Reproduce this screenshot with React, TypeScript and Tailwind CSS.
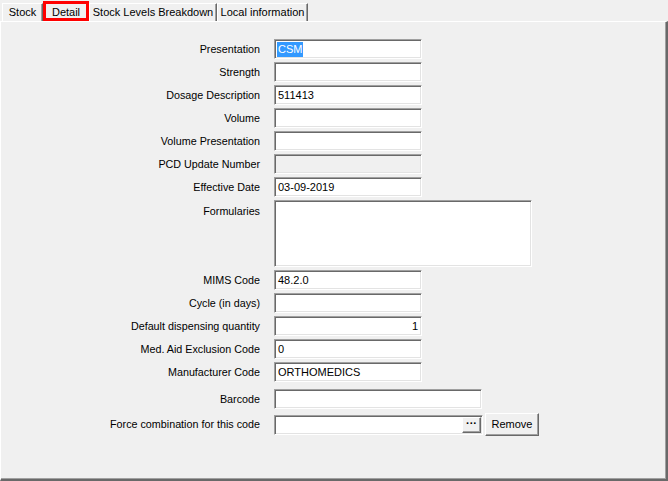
import React from "react";

const font = { fontFamily: '"Liberation Sans", Arial, sans-serif' };

function Field({ value = "", width = 148, height = 20, align = "left", disabled = false, selected = false, className = "" }: { value?: string; width?: number; height?: number; align?: "left" | "right"; disabled?: boolean; selected?: boolean; className?: string }) {
  return (
    <div
      className={`border border-t-[#a0a0a0] border-l-[#a0a0a0] border-r-white border-b-white shadow-[inset_1px_1px_0_#696969,inset_-1px_-1px_0_#e3e3e3] ${disabled ? "bg-[#f0f0f0]" : "bg-white"} flex items-center px-[3px] text-[11px] leading-none text-black ${align === "right" ? "justify-end" : ""} ${className}`}
      style={{ width, height }}
    >
      {selected ? <span className="bg-[#3399ff] text-white px-[1px] py-[2px] -ml-[1px]">{value}</span> : <span className="pt-[1px]">{value}</span>}
    </div>
  );
}

function Row({ label, children, top = false, className = "" }: { label: string; children: React.ReactNode; top?: boolean; className?: string }) {
  return (
    <div className={`flex ${top ? "items-start" : "items-center"} ${className}`}>
      <div className={`w-[259px] text-right text-[10.75px] leading-none text-black mr-[14px] ${top ? "pt-[6px]" : ""}`}>{label}</div>
      {children}
    </div>
  );
}

function Tab({ label, w, selected = false }: { label: string; w: number; selected?: boolean }) {
  if (selected) {
    return (
      <div className="h-[20px] border-[3px] border-[#ff0000] bg-[#f0f0f0] flex items-start justify-center text-[11px] leading-none pt-[3px] -mb-[1px] relative z-10" style={{ width: w }}>
        {label}
      </div>
    );
  }
  return (
    <div className="h-[18px] border-t border-l border-white border-r border-r-[#696969] shadow-[inset_-1px_0_0_#a0a0a0] flex items-center justify-center text-[11px] leading-none pb-[1px]" style={{ width: w }}>
      {label}
    </div>
  );
}

export default function App() {
  return (
    <div className="w-[668px] h-[481px] bg-[#f0f0f0] overflow-hidden flex flex-col" style={font}>
      <div className="h-[21px] flex items-end pl-[2px] shrink-0">
        <Tab label="Stock" w={41} />
        <div className="self-start mt-[1px]">
          <Tab label="Detail" w={46} selected />
        </div>
        <Tab label="Stock Levels Breakdown" w={128} />
        <Tab label="Local information" w={91} />
      </div>
      <div className="flex-1 border-t border-l border-white border-r-2 border-r-[#696969] border-b-2 border-b-[#696969] shadow-[inset_-1px_-1px_0_#a0a0a0] flex flex-col pt-[17px] gap-[3px]">
        <Row label="Presentation"><Field value="CSM" selected /></Row>
        <Row label="Strength"><Field /></Row>
        <Row label="Dosage Description"><Field value="511413" /></Row>
        <Row label="Volume"><Field /></Row>
        <Row label="Volume Presentation"><Field /></Row>
        <Row label="PCD Update Number"><Field disabled /></Row>
        <Row label="Effective Date"><Field value="03-09-2019" /></Row>
        <Row label="Formularies" top><Field width={258} height={67} /></Row>
        <Row label="MIMS Code"><Field value="48.2.0" /></Row>
        <Row label="Cycle (in days)"><Field /></Row>
        <Row label="Default dispensing quantity"><Field value="1" align="right" /></Row>
        <Row label="Med. Aid Exclusion Code"><Field value="0" /></Row>
        <Row label="Manufacturer Code"><Field value="ORTHOMEDICS" /></Row>
        <Row label="Barcode" className="mt-[4px]"><Field width={208} /></Row>
        <Row label="Force combination for this code" className="mt-[1px]">
          <div className="w-[209px] h-[20px] border border-t-[#a0a0a0] border-l-[#a0a0a0] border-r-white border-b-white shadow-[inset_1px_1px_0_#696969,inset_-1px_-1px_0_#e3e3e3] bg-white flex items-stretch justify-end p-[1px]">
            <div className="w-[19px] bg-[#f0f0f0] border border-t-white border-l-white border-r-[#696969] border-b-[#696969] shadow-[inset_-1px_-1px_0_#a0a0a0] flex items-center justify-center text-[11px] font-bold leading-none pb-[2px]">
              ···
            </div>
          </div>
          <div className="ml-[2px] w-[54px] h-[23px] bg-[#f0f0f0] border border-t-white border-l-white border-r-[#696969] border-b-[#696969] shadow-[inset_-1px_-1px_0_#a0a0a0] flex items-center justify-center text-[11px] leading-none">
            Remove
          </div>
        </Row>
      </div>
    </div>
  );
}
